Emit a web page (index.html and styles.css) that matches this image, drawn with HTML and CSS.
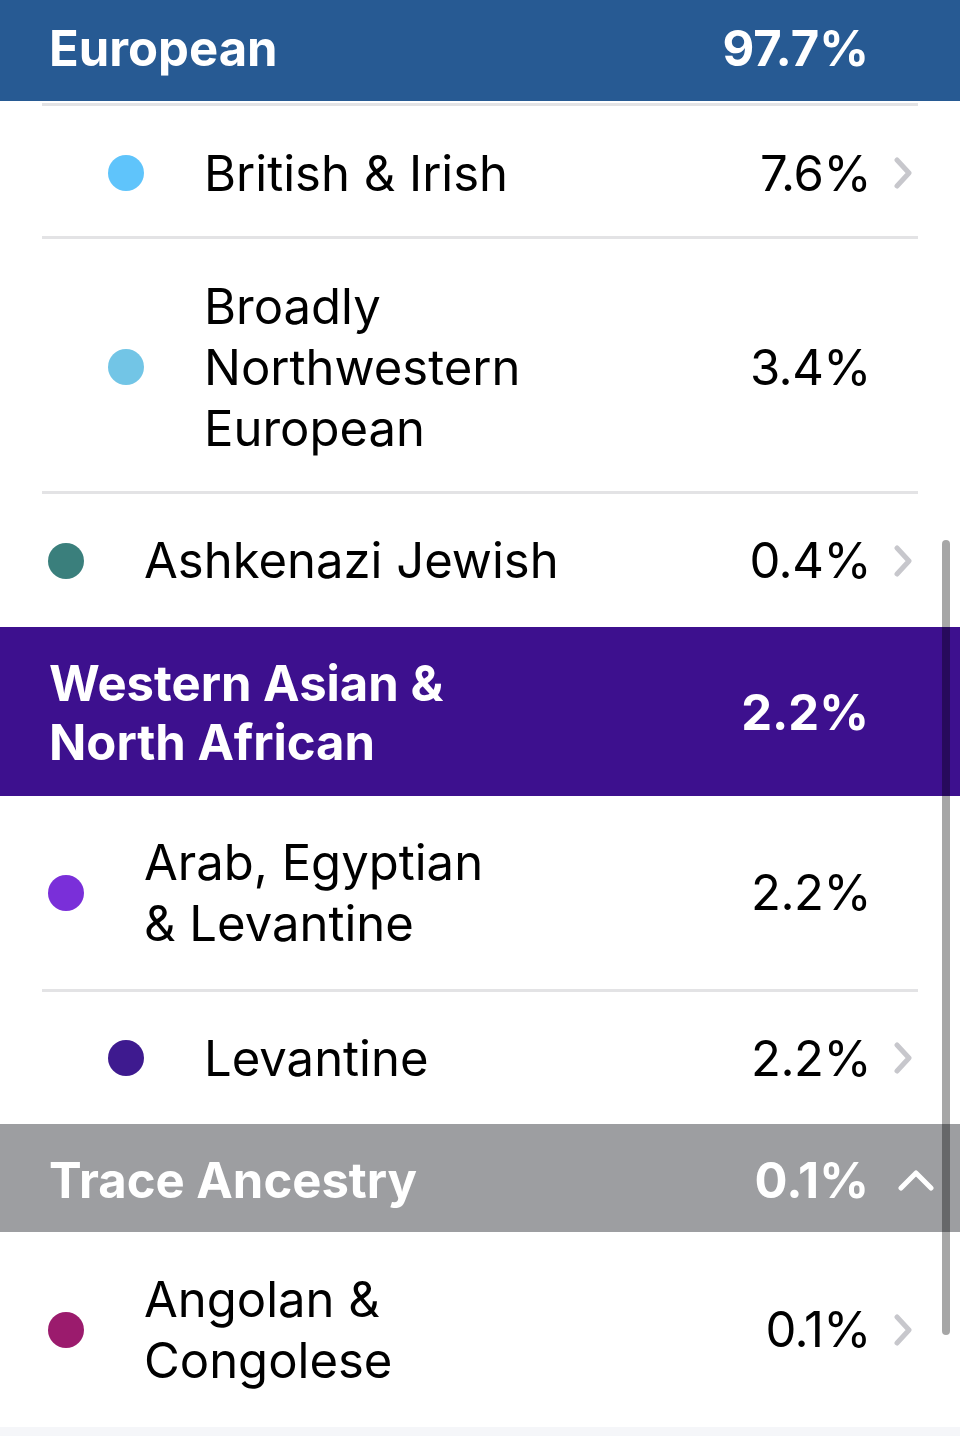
FILE: index.html
```html
<!DOCTYPE html>
<html lang="en">
<head>
<meta charset="utf-8">
<title>Ancestry composition</title>
<link rel="stylesheet" href="styles.css">
</head>
<body>
<div class="page">
  <div class="list">
    <div class="group-head european">
      <div class="g-name">European</div>
      <div class="g-pct">97.7%</div>
      <div class="g-icon"></div>
    </div>
    <div class="gap-top"></div>
    <div class="sep"></div>

    <div class="row lvl2 h-130">
      <span class="dot c-british"></span>
      <span class="name">British &amp; Irish</span>
      <span class="pct">7.6%</span>
      <span class="chev"><svg viewBox="0 0 18 32" width="18" height="32"><path d="M3 3 L15 16 L3 29" fill="none" stroke="#c7c7cc" stroke-width="5" stroke-linecap="round" stroke-linejoin="round"/></svg></span>
    </div>
    <div class="sep"></div>

    <div class="row lvl2 h-252">
      <span class="dot c-broad"></span>
      <span class="name">Broadly<br>Northwestern<br>European</span>
      <span class="pct">3.4%</span>
      <span class="chev"></span>
    </div>
    <div class="sep"></div>

    <div class="row lvl1 h-133">
      <span class="dot c-ashk"></span>
      <span class="name">Ashkenazi Jewish</span>
      <span class="pct">0.4%</span>
      <span class="chev"><svg viewBox="0 0 18 32" width="18" height="32"><path d="M3 3 L15 16 L3 29" fill="none" stroke="#c7c7cc" stroke-width="5" stroke-linecap="round" stroke-linejoin="round"/></svg></span>
    </div>

    <div class="group-head wana">
      <div class="g-name">Western Asian &amp;<br>North African</div>
      <div class="g-pct">2.2%</div>
      <div class="g-icon"></div>
    </div>

    <div class="row lvl1 h-193">
      <span class="dot c-arab"></span>
      <span class="name">Arab, Egyptian<br>&amp; Levantine</span>
      <span class="pct">2.2%</span>
      <span class="chev"></span>
    </div>
    <div class="sep"></div>

    <div class="row lvl2 h-132">
      <span class="dot c-lev"></span>
      <span class="name">Levantine</span>
      <span class="pct">2.2%</span>
      <span class="chev"><svg viewBox="0 0 18 32" width="18" height="32"><path d="M3 3 L15 16 L3 29" fill="none" stroke="#c7c7cc" stroke-width="5" stroke-linecap="round" stroke-linejoin="round"/></svg></span>
    </div>

    <div class="group-head trace">
      <div class="g-name">Trace Ancestry</div>
      <div class="g-pct">0.1%</div>
      <div class="g-icon"><svg viewBox="0 0 36 24" width="36" height="24"><path d="M3 20 L18 5 L33 20" fill="none" stroke="#ffffff" stroke-width="5" stroke-linecap="round" stroke-linejoin="round"/></svg></div>
    </div>

    <div class="row lvl1 h-195">
      <span class="dot c-angola"></span>
      <span class="name">Angolan &amp;<br>Congolese</span>
      <span class="pct">0.1%</span>
      <span class="chev"><svg viewBox="0 0 18 32" width="18" height="32"><path d="M3 3 L15 16 L3 29" fill="none" stroke="#c7c7cc" stroke-width="5" stroke-linecap="round" stroke-linejoin="round"/></svg></span>
    </div>
  </div>
  <div class="scrollbar"></div>
</div>
</body>
</html>
```

FILE: styles.css
```css
html, body {
  margin: 0;
  padding: 0;
}
body {
  background: #f5f6f9;
  font-family: Inter, "Liberation Sans", sans-serif;
  color: #000;
}
.page {
  position: relative;
  width: 960px;
  height: 1436px;
  overflow: hidden;
}
.list {
  background: #ffffff;
}
.group-head {
  display: flex;
  align-items: center;
  padding-left: 49px;
  color: #ffffff;
  font-weight: 700;
  font-size: 49px;
  line-height: 59px;
}
.group-head .g-name {
  flex: 1;
}
.group-head .g-pct {
  text-align: right;
}
.group-head .g-icon {
  width: 91px;
  display: flex;
  align-items: center;
  padding-left: 29px;
  box-sizing: border-box;
}
.group-head .g-icon svg {
  display: block;
}
.european {
  background: #275a93;
  height: 101px;
  padding-bottom: 4px;
  box-sizing: border-box;
}
.wana {
  background: #3d108e;
  height: 169px;
  padding-top: 2px;
  box-sizing: border-box;
}
.trace {
  background: #9d9ea1;
  height: 108px;
  padding-top: 4px;
  box-sizing: border-box;
}
.gap-top {
  height: 2px;
}
.sep {
  height: 3px;
  margin: 0 42px;
  background: #e3e3e5;
}
.row {
  display: flex;
  align-items: center;
  font-size: 49px;
  line-height: 61px;
  font-weight: 400;
  padding-right: 48px;
  box-sizing: border-box;
}
.row.lvl1 { padding-left: 48px; }
.row.lvl2 { padding-left: 108px; }
.h-130 { height: 130px; padding-top: 4px; }
.h-252 { height: 252px; padding-top: 4px; }
.h-133 { height: 133px; }
.h-193 { height: 193px; }
.h-132 { height: 132px; }
.h-195 { height: 195px; }
.dot {
  flex: none;
  width: 36px;
  height: 36px;
  border-radius: 50%;
  margin-right: 60px;
}
.c-british { background: #5fc4fb; }
.c-broad { background: #72c5e6; }
.c-ashk { background: #3a7f7c; }
.c-arab { background: #7a2fd9; }
.c-lev { background: #3e1a8f; }
.c-angola { background: #9b1b6d; }
.name {
  flex: 1;
}
.pct {
  text-align: right;
  letter-spacing: -0.5px;
}
.chev {
  flex: none;
  width: 18px;
  margin-left: 23px;
  display: flex;
  align-items: center;
}
.chev svg { display: block; }
.scrollbar {
  position: absolute;
  left: 942px;
  top: 540px;
  width: 8px;
  height: 795px;
  border-radius: 4px;
  background: rgba(0, 0, 0, 0.35);
}
```
